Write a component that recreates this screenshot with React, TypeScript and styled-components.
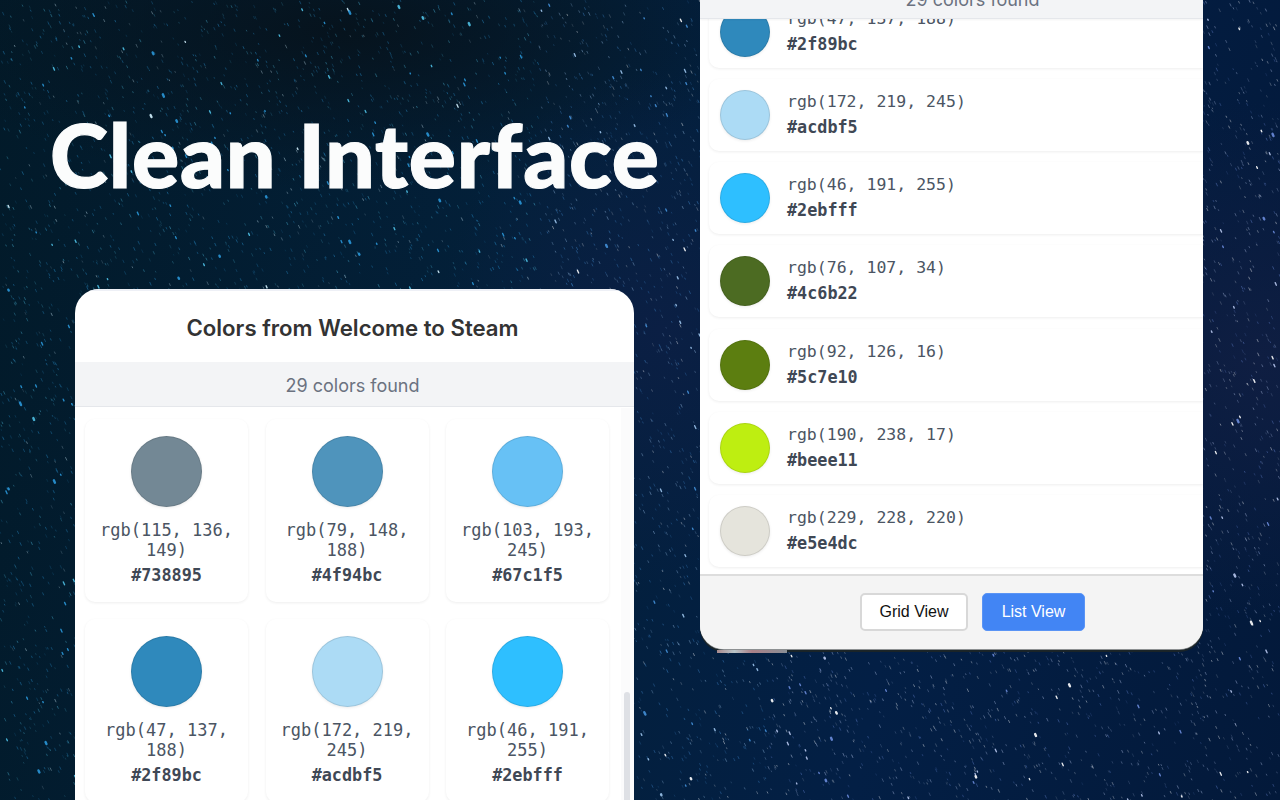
import React from 'react';
import styled, { createGlobalStyle } from 'styled-components';

const Global = createGlobalStyle`
  html, body { margin: 0; padding: 0; background: #04182c; }
  * { box-sizing: border-box; }
`;

const Stage = styled.div`
  position: relative;
  width: 1280px;
  height: 800px;
  overflow: hidden;
  display: flex;
  background:
    radial-gradient(ellipse 260px 260px at 1260px 360px, #0f1e42 0%, rgba(15,30,66,0) 100%),
    radial-gradient(ellipse 220px 260px at 660px 330px, #0b1f44 0%, rgba(11,31,68,0) 100%),
    radial-gradient(ellipse 420px 160px at 340px 30px, #06131d 0%, rgba(6,19,29,0) 100%),
    linear-gradient(100deg, #021a29 0%, #03203a 40%, #031f45 70%, #03193a 100%);
`;

const Sky = styled.svg`
  position: absolute;
  inset: 0;
`;

const LeftColumn = styled.div`
  position: relative;
  width: 700px;
  flex: none;
  display: flex;
  flex-direction: column;
`;

const Title = styled.h1`
  flex: none;
  margin: 98px 0 0 50px;
  height: 191px;
  font-family: Lato, sans-serif;
  font-weight: 900;
  font-size: 88px;
  line-height: 112px;
  letter-spacing: 0.8px;
  color: #fbfcfc;
  white-space: nowrap;
  -webkit-text-stroke: 1.2px #fbfcfc;
`;

const Window = styled.section`
  background: #fff;
  overflow: hidden;
  font-family: Inter, sans-serif;
`;

const LeftWindow = styled(Window)`
  position: relative;
  width: 559px;
  height: 560px;
  margin-left: 75px;
  border-radius: 24px 24px 0 0;
  flex: none;
`;

const Header = styled.header`
  height: 73px;
  display: flex;
  align-items: center;
  justify-content: center;
  font-size: 22.2px;
  font-weight: 600;
  color: #333;
  padding: 4px 4px 0 0;
  box-shadow: inset 0 2px 0 #eef0f6, 0 1px 2px rgba(0,0,0,0.05);
`;

const CountBar = styled.div`
  height: 45px;
  display: flex;
  align-items: center;
  justify-content: center;
  background: #f3f4f6;
  border-bottom: 1px solid #e5e7eb;
  font-size: 18px;
  color: #6b7280;
  padding: 2px 4px 0 0;
`;

const Grid = styled.div`
  display: grid;
  grid-template-columns: repeat(3, 163px);
  grid-auto-rows: 183px;
  column-gap: 17.5px;
  row-gap: 17px;
  padding: 12px 0 0 10px;
`;

const Card = styled.article`
  background: #fff;
  border-radius: 10px;
  box-shadow: 0 1px 3px rgba(0,0,0,0.07);
  display: flex;
  flex-direction: column;
  align-items: center;
  padding-top: 17px;
  text-align: center;
`;

const Swatch = styled.div<{ $size: number; $color: string }>`
  flex: none;
  width: ${p => p.$size}px;
  height: ${p => p.$size}px;
  border-radius: 50%;
  background: ${p => p.$color};
  border: 1px solid rgba(0,0,0,0.1);
  box-shadow: 0 1px 3px rgba(0,0,0,0.08);
`;

const Rgb = styled.div`
  font-family: "DejaVu Sans Mono", monospace;
  font-size: 16.5px;
  line-height: 20px;
  color: #4b5563;
`;

const Hex = styled.div`
  font-family: "DejaVu Sans Mono", monospace;
  font-size: 16.8px;
  line-height: 20px;
  font-weight: 700;
  color: #3f4855;
`;

const CardRgb = styled(Rgb)`
  font-size: 17px;
  margin-top: 13.4px;
  width: 140px;
`;

const CardHex = styled(Hex)`
  margin-top: 5px;
`;

const ScrollTrack = styled.div`
  position: absolute;
  top: 119px;
  right: 0;
  width: 13px;
  bottom: 0;
  background: #fbfbfc;
`;

const ScrollThumb = styled.div`
  position: absolute;
  top: 284px;
  left: 3px;
  width: 6px;
  bottom: 0;
  border-radius: 3px 3px 0 0;
  background: #dee0e5;
`;

const RightColumn = styled.div`
  position: relative;
  flex: 1;
  display: flex;
  flex-direction: column;
  justify-content: flex-end;
  padding-bottom: 151px;
`;

const RightWindow = styled(Window)`
  width: 503px;
  height: 700px;
  flex: none;
  border-radius: 0 0 24px 24px;
  display: flex;
  flex-direction: column;
  box-shadow: 0 1px 0 #8d9092, 0 3px 0 #1a2428;
`;

const RightCount = styled(CountBar)`
  flex: none;
  height: 70px;
  padding: 32px 0 0 42px;
  position: relative;
  z-index: 1;
  box-shadow: 0 1px 2px rgba(0,0,0,0.05);
`;

const RowList = styled.div`
  flex: 1;
  min-height: 0;
  overflow: hidden;
  display: flex;
  flex-direction: column;
  justify-content: flex-end;
  gap: 11.2px;
  padding: 0 0 7px 9px;
`;

const Row = styled.article`
  flex: none;
  height: 72px;
  background: #fff;
  border-radius: 10px 0 0 10px;
  box-shadow: 0 1px 3px rgba(0,0,0,0.07);
  display: flex;
  align-items: center;
  padding-left: 11px;
  gap: 17px;
`;

const RowText = styled.div`
  display: flex;
  flex-direction: column;
  gap: 5px;
  margin-bottom: 1px;
`;

const Footer = styled.footer`
  flex: none;
  height: 75px;
  background: #f4f4f4;
  border-top: 2px solid #dddddd;
  display: flex;
  align-items: center;
  justify-content: center;
  gap: 14px;
  padding: 0 0 2px 42px;
`;

const ViewButton = styled.button<{ $active?: boolean }>`
  height: 38px;
  width: ${p => (p.$active ? 103 : 108)}px;
  padding: 0;
  border-radius: 5px;
  font-family: "Liberation Sans", Arial, sans-serif;
  font-size: 16px;
  border: ${p => (p.$active ? '1px solid #5a94f5' : '2px solid #d8d8d8')};
  background: ${p => (p.$active ? '#4285f4' : '#fff')};
  color: ${p => (p.$active ? '#fff' : '#111')};
`;

const Bleed = styled.div`
  position: absolute;
  left: 717px;
  top: 650px;
  width: 70px;
  height: 3px;
  background: linear-gradient(90deg, #a98a8e, #b9c4c8 25%, #a98088 50%, #8a8f96);
`;

type Star = { x: number; y: number; l: number; o: number; c: string; w: number };

function makeStars() {
  let s = 20240613;
  const r = () => {
    s = (s * 1664525 + 1013904223) >>> 0;
    return s / 4294967296;
  };
  const faint: Star[] = [];
  const bright: Star[] = [];
  for (let i = 0; i < 11000; i++) {
    const x = r() * 1280;
    const y = r() * 800;
    const t = x / 1280;
    const big = r();
    const hue = r();
    let c: string;
    if (t < 0.42) c = hue < 0.6 ? '#2a97d8' : hue < 0.9 ? '#4fc0e4' : '#d4f2ff';
    else if (t < 0.6) c = hue < 0.45 ? '#4490d8' : hue < 0.85 ? '#9cc4ec' : '#ffffff';
    else c = hue < 0.25 ? '#6c8cdc' : hue < 0.7 ? '#b8c8ee' : '#ffffff';
    const star: Star = {
      x,
      y,
      l: 0.8 + r() * 2,
      o: big > 0.94 ? 0.9 : 0.15 + r() * 0.4,
      c,
      w: big > 0.99 ? 2.4 : big > 0.94 ? 1.4 : 0.8,
    };
    (big > 0.94 ? bright : faint).push(star);
  }
  return { faint, bright };
}
const { faint, bright } = makeStars();

const StarLine = ({ st }: { st: Star }) => (
  <line
    x1={st.x}
    y1={st.y}
    x2={st.x + st.l * 0.45}
    y2={st.y + st.l}
    stroke={st.c}
    strokeOpacity={st.o}
    strokeWidth={st.w}
    strokeLinecap="round"
  />
);

const gridColors = [
  ['rgb(115, 136, 149)', '#738895'],
  ['rgb(79, 148, 188)', '#4f94bc'],
  ['rgb(103, 193, 245)', '#67c1f5'],
  ['rgb(47, 137, 188)', '#2f89bc'],
  ['rgb(172, 219, 245)', '#acdbf5'],
  ['rgb(46, 191, 255)', '#2ebfff'],
];

const listColors = [
  ['rgb(47, 137, 188)', '#2f89bc'],
  ['rgb(172, 219, 245)', '#acdbf5'],
  ['rgb(46, 191, 255)', '#2ebfff'],
  ['rgb(76, 107, 34)', '#4c6b22'],
  ['rgb(92, 126, 16)', '#5c7e10'],
  ['rgb(190, 238, 17)', '#beee11'],
  ['rgb(229, 228, 220)', '#e5e4dc'],
];

export default function App() {
  return (
    <Stage>
      <Global />
      <Sky width={1280} height={800} viewBox="0 0 1280 800">
        {faint.map((st, i) => (
          <StarLine key={i} st={st} />
        ))}
        {bright.map((st, i) => (
          <StarLine key={i} st={st} />
        ))}
      </Sky>
      <LeftColumn>
        <Title>Clean Interface</Title>
        <LeftWindow>
          <Header>Colors from Welcome to Steam</Header>
          <CountBar>29 colors found</CountBar>
          <Grid>
            {gridColors.map(([rgb, hex]) => (
              <Card key={hex}>
                <Swatch $size={71} $color={hex} />
                <CardRgb>{rgb}</CardRgb>
                <CardHex>{hex}</CardHex>
              </Card>
            ))}
          </Grid>
          <ScrollTrack>
            <ScrollThumb />
          </ScrollTrack>
        </LeftWindow>
      </LeftColumn>
      <RightColumn>
        <RightWindow>
          <RightCount>29 colors found</RightCount>
          <RowList>
            {listColors.map(([rgb, hex]) => (
              <Row key={hex}>
                <Swatch $size={50} $color={hex} />
                <RowText>
                  <Rgb>{rgb}</Rgb>
                  <Hex>{hex}</Hex>
                </RowText>
              </Row>
            ))}
          </RowList>
          <Footer>
            <ViewButton>Grid View</ViewButton>
            <ViewButton $active>List View</ViewButton>
          </Footer>
        </RightWindow>
      </RightColumn>
      <Bleed />
    </Stage>
  );
}
